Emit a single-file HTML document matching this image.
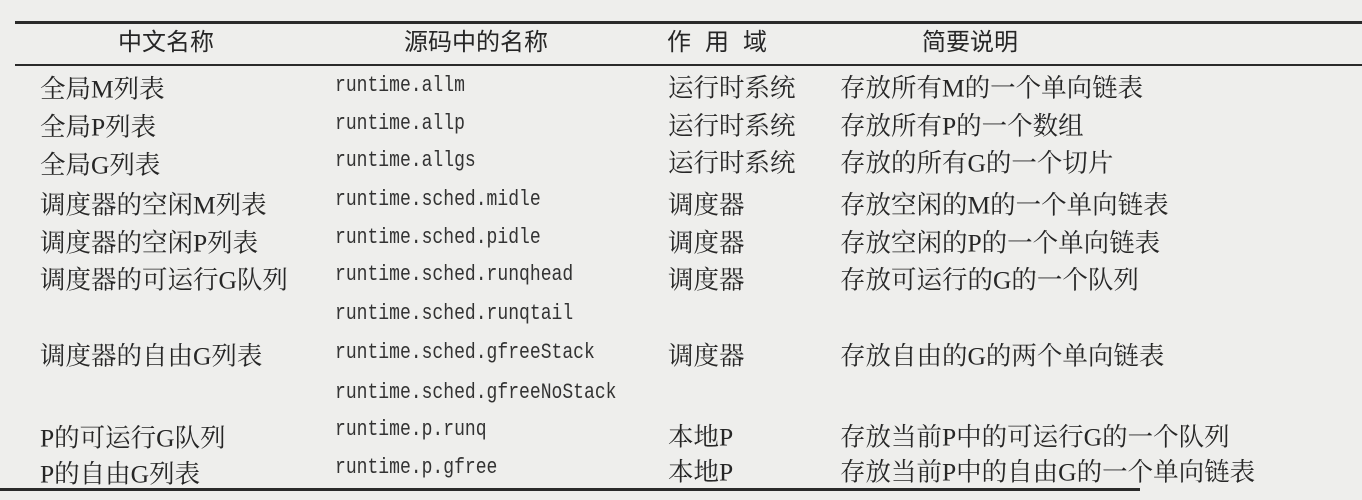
<!DOCTYPE html>
<html><head><meta charset="utf-8"><style>
html,body{margin:0;padding:0}
body{width:1362px;height:500px;background:#eeeeec;position:relative;overflow:hidden;font-family:"Liberation Serif","Noto Serif CJK SC","Noto Sans CJK SC",serif;color:#262626}
.t{position:absolute;white-space:nowrap;font-size:25.5px;line-height:1;transform:translateY(-50%)}
.h{font-family:"Liberation Sans","Noto Sans CJK SC",sans-serif;font-size:24px}
.m{font-family:"Liberation Mono",monospace;font-size:22px;color:#333;transform:translateY(-50%) scaleX(0.82);transform-origin:left center}
.line{position:absolute;background:#2a2a2a}
</style></head><body>
<div class="line" style="left:15px;top:21px;width:1347px;height:3px"></div>
<div class="line" style="left:15px;top:64px;width:1347px;height:2px"></div>
<div class="line" style="left:0;top:488px;width:1140px;height:3px"></div>

<div class="t h" style="left:118px;top:43px">中文名称</div>
<div class="t h" style="left:404px;top:43px">源码中的名称</div>
<div class="t h" style="left:667px;top:43px;letter-spacing:14px">作用域</div>
<div class="t h" style="left:922px;top:43px">简要说明</div>

<div class="t" style="left:40px;top:89px">全局M列表</div>
<div class="t" style="left:40px;top:127px">全局P列表</div>
<div class="t" style="left:40px;top:165px">全局G列表</div>
<div class="t" style="left:40px;top:205px">调度器的空闲M列表</div>
<div class="t" style="left:40px;top:243px">调度器的空闲P列表</div>
<div class="t" style="left:40px;top:280px">调度器的可运行G队列</div>
<div class="t" style="left:40px;top:356px">调度器的自由G列表</div>
<div class="t" style="left:40px;top:438px">P的可运行G队列</div>
<div class="t" style="left:40px;top:474px">P的自由G列表</div>

<div class="t m" style="left:335px;top:86px">runtime.allm</div>
<div class="t m" style="left:335px;top:124px">runtime.allp</div>
<div class="t m" style="left:335px;top:161px">runtime.allgs</div>
<div class="t m" style="left:335px;top:200px">runtime.sched.midle</div>
<div class="t m" style="left:335px;top:238px">runtime.sched.pidle</div>
<div class="t m" style="left:335px;top:275px">runtime.sched.runqhead</div>
<div class="t m" style="left:335px;top:314px">runtime.sched.runqtail</div>
<div class="t m" style="left:335px;top:353px">runtime.sched.gfreeStack</div>
<div class="t m" style="left:335px;top:393px">runtime.sched.gfreeNoStack</div>
<div class="t m" style="left:335px;top:430px">runtime.p.runq</div>
<div class="t m" style="left:335px;top:468px">runtime.p.gfree</div>

<div class="t" style="left:668px;top:88px">运行时系统</div>
<div class="t" style="left:668px;top:126px">运行时系统</div>
<div class="t" style="left:668px;top:163px">运行时系统</div>
<div class="t" style="left:668px;top:205px">调度器</div>
<div class="t" style="left:668px;top:243px">调度器</div>
<div class="t" style="left:668px;top:280px">调度器</div>
<div class="t" style="left:668px;top:356px">调度器</div>
<div class="t" style="left:668px;top:437px">本地P</div>
<div class="t" style="left:668px;top:472px">本地P</div>

<div class="t" style="left:840px;top:88px">存放所有M的一个单向链表</div>
<div class="t" style="left:840px;top:126px">存放所有P的一个数组</div>
<div class="t" style="left:840px;top:163px">存放的所有G的一个切片</div>
<div class="t" style="left:840px;top:205px">存放空闲的M的一个单向链表</div>
<div class="t" style="left:840px;top:243px">存放空闲的P的一个单向链表</div>
<div class="t" style="left:840px;top:280px">存放可运行的G的一个队列</div>
<div class="t" style="left:840px;top:356px">存放自由的G的两个单向链表</div>
<div class="t" style="left:840px;top:437px">存放当前P中的可运行G的一个队列</div>
<div class="t" style="left:840px;top:472px">存放当前P中的自由G的一个单向链表</div>
</body></html>
